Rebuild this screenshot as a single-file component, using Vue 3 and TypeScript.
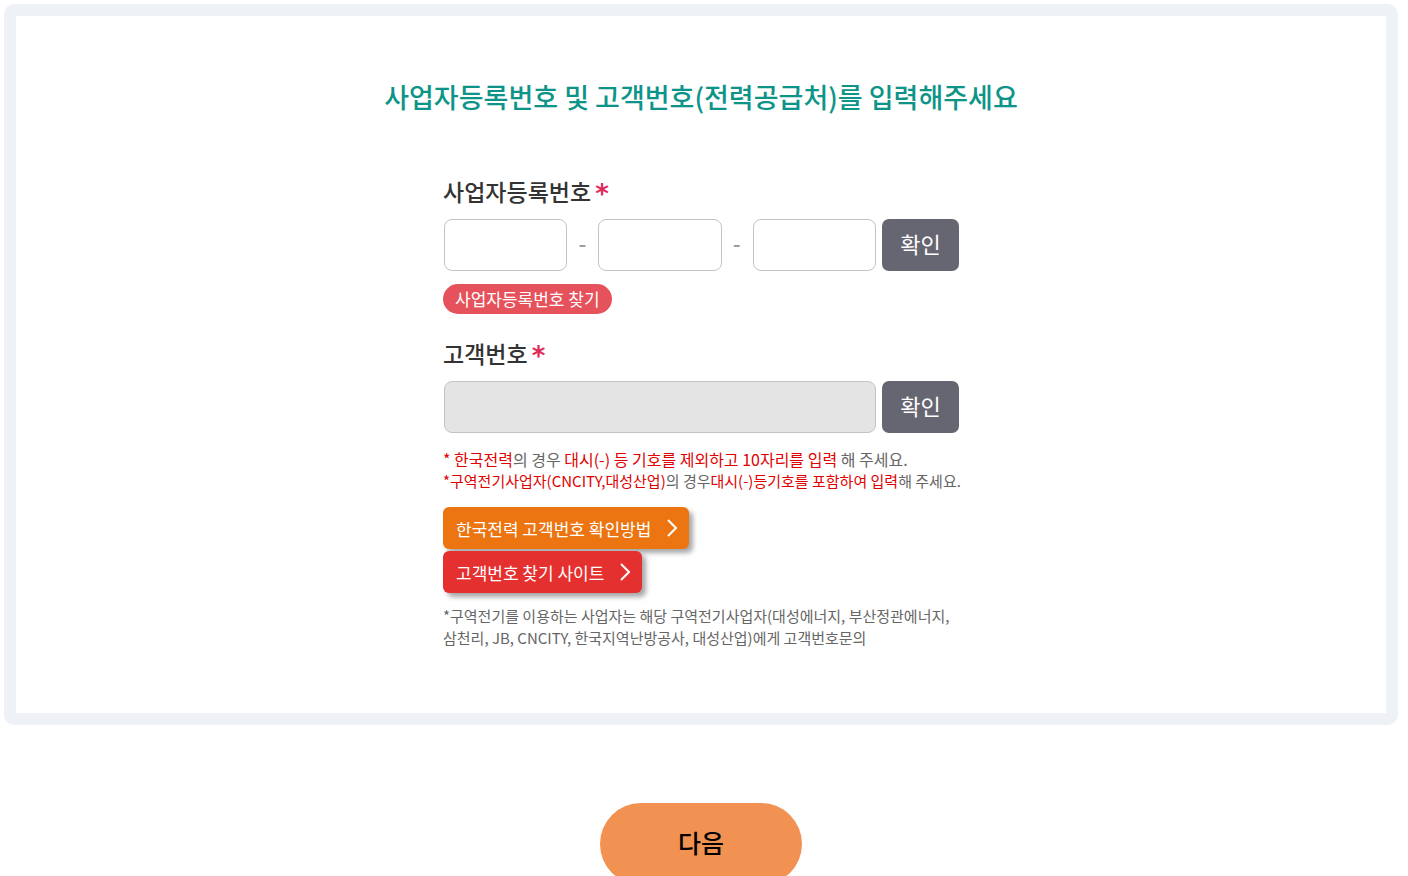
<script setup lang="ts">
import { ref } from 'vue'

const registration = ref<string[]>(['', '', ''])
const customerNumber = ref('')
const partNames = ['앞자리', '가운데 자리', '뒷자리']
</script>

<template>
  <main class="page">
    <section class="frame">
      <h1 class="title">사업자등록번호 및 고객번호(전력공급처)를 입력해주세요</h1>
      <form class="form" @submit.prevent>
        <h2 class="label" id="reg-label">사업자등록번호 <span class="required">*</span></h2>
        <div class="row" role="group" aria-labelledby="reg-label">
          <template v-for="(name, i) in partNames" :key="name">
            <span v-if="i > 0" class="dash">-</span>
            <input v-model="registration[i]" class="field" type="text" :aria-label="name" />
          </template>
          <button class="confirm" type="button">확인</button>
        </div>
        <a class="find" href="#">사업자등록번호 찾기</a>

        <label class="label" for="customer">고객번호 <span class="required">*</span></label>
        <div class="row">
          <input id="customer" v-model="customerNumber" class="field" type="text" disabled />
          <button class="confirm" type="button">확인</button>
        </div>

        <p class="note note-large"><em>* 한국전력</em>의 경우 <em>대시(-) 등 기호를 제외하고 10자리를 입력</em> 해 주세요.</p>
        <p class="note"><em>*구역전기사업자(CNCITY,대성산업)</em>의 경우<em>대시(-)등기호를 포함하여 입력</em>해 주세요.</p>

        <div class="links">
          <a class="link link-orange" href="#">
            한국전력 고객번호 확인방법
            <svg class="arrow" viewBox="0 0 10 18" aria-hidden="true"><path d="M1 1l8 8-8 8" /></svg>
          </a>
          <a class="link link-red" href="#">
            고객번호 찾기 사이트
            <svg class="arrow" viewBox="0 0 10 18" aria-hidden="true"><path d="M1 1l8 8-8 8" /></svg>
          </a>
        </div>

        <p class="note">*구역전기를 이용하는 사업자는 해당 구역전기사업자(대성에너지, 부산정관에너지,</p>
        <p class="note">삼천리, JB, CNCITY, 한국지역난방공사, 대성산업)에게 고객번호문의</p>
      </form>
    </section>
    <button class="next" type="button">다음</button>
  </main>
</template>

<style>
body {
  margin: 0;
  background: #fff;
}
</style>

<style scoped>
.page {
  padding: 4px 10px 0 4px;
  font-family: "Noto Sans CJK KR", sans-serif;
  color: #333;
  display: flex;
  flex-direction: column;
}
.page * {
  box-sizing: border-box;
}
.frame {
  border: 12px solid #eef2f7;
  border-radius: 10px;
  padding: 59px 20px 64px;
}
.title {
  margin: 0 0 56px;
  text-align: center;
  font-size: 27px;
  line-height: 44px;
  font-weight: 500;
  color: #0d9488;
}
.form {
  max-width: 516px;
  margin: 0 auto;
  display: flex;
  flex-direction: column;
}
.label {
  display: flex;
  align-items: center;
  gap: 4px;
  margin: 0 0 12px;
  font-size: 23px;
  line-height: 32px;
  font-weight: 500;
}
.required {
  padding-top: 7px;
  font-family: "DejaVu Sans", sans-serif;
  font-size: 26px;
  line-height: 25px;
  color: #e02b5b;
  font-weight: 700;
}
.row {
  display: flex;
  align-items: center;
}
.field {
  flex: 1;
  min-width: 0;
  height: 52px;
  margin: 0 0 0 1px;
  padding: 0 12px;
  border: 1px solid #c4c4c4;
  border-radius: 8px;
  background: #fff;
  font: inherit;
  font-size: 20px;
}
.field:disabled {
  background: #e4e4e4;
}
.dash {
  width: 30px;
  padding-bottom: 7px;
  text-align: center;
  font-size: 22px;
  line-height: 32px;
  font-weight: 500;
  color: #999;
}
.confirm {
  width: 77px;
  height: 52px;
  margin: 0 0 0 6px;
  padding: 0 0 4px;
  border: 0;
  border-radius: 7px;
  background: #666672;
  color: #fff;
  font: inherit;
  font-size: 22px;
}
.find {
  align-self: flex-start;
  margin: 13px 0 23px;
  padding: 0 12px;
  border-radius: 15px;
  background: #e5525b;
  color: #fff;
  font-size: 17px;
  line-height: 30px;
  text-decoration: none;
}
.note {
  margin: 0;
  font-size: 15px;
  line-height: 22px;
  color: #666;
  white-space: nowrap;
}
.note-large {
  margin-top: 15px;
  font-size: 16px;
}
.note em {
  font-style: normal;
  color: #e00000;
}
.links {
  display: flex;
  flex-direction: column;
  align-items: flex-start;
  gap: 2px;
  margin: 15px 0 12px;
}
.link {
  display: flex;
  align-items: center;
  gap: 16px;
  padding: 2px 12px 0 13px;
  border-radius: 6px;
  box-shadow: 4px 4px 5px rgba(0, 0, 0, 0.35);
  color: #fff;
  font-size: 17px;
  line-height: 40px;
  text-decoration: none;
}
.link-orange {
  background: #ec7511;
}
.link-red {
  background: #e53030;
}
.arrow {
  width: 10px;
  height: 18px;
  margin-bottom: 2px;
  fill: none;
  stroke: #fff;
  stroke-width: 2;
}
.next {
  align-self: center;
  width: 202px;
  height: 82px;
  margin: 78px 0 0;
  padding: 0 0 4px;
  border: 0;
  border-radius: 41px;
  background: #f29252;
  color: #000;
  font: inherit;
  font-size: 25px;
  font-weight: 500;
}
</style>
